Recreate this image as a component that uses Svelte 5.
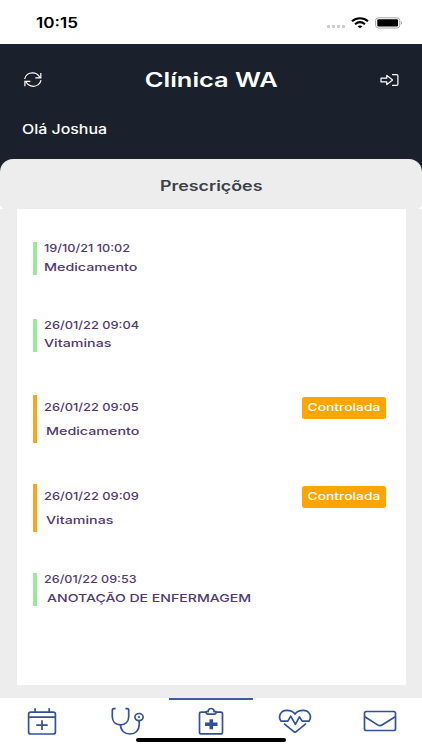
<script lang="ts">
	type Entry = {
		date: string;
		dateWidth: number;
		name: string;
		nameWidth: number;
		indent?: number;
		controlled?: boolean;
	};

	const entries: Entry[] = [
		{ date: '19/10/21 10:02', dateWidth: 85.5, name: 'Medicamento', nameWidth: 93.5 },
		{ date: '26/01/22 09:04', dateWidth: 95.5, name: 'Vitaminas', nameWidth: 67.5 },
		{ date: '26/01/22 09:05', dateWidth: 94.5, name: 'Medicamento', nameWidth: 93.5, indent: 2, controlled: true },
		{ date: '26/01/22 09:09', dateWidth: 94.5, name: 'Vitaminas', nameWidth: 67.5, indent: 2, controlled: true },
		{ date: '26/01/22 09:53', dateWidth: 92.5, name: 'ANOTAÇÃO DE ENFERMAGEM', nameWidth: 203.5, indent: 3 }
	];

	const tabs = ['calendar', 'stethoscope', 'clipboard', 'heart', 'mail'];
	let active = $state('clipboard');

	// Widens the letters so that the label takes the given width
	function fit(node: HTMLElement, width: number) {
		node.style.transform = `scaleX(${width / node.offsetWidth})`;
	}
</script>

<div class="screen">
	<div class="status">
		<span class="clock" use:fit={41.5}>10:15</span>
		<div class="status-icons">
			<div class="dots"><i></i><i></i><i></i><i></i></div>
			<svg class="wifi" width="18" height="12" viewBox="0 0 18 12" fill="none" stroke="#000" stroke-width="2">
				<path d="M1 4.2C5.5.3 12.5.3 17 4.2" />
				<path d="M4 7.2c3-2.5 7-2.5 10 0" />
				<path d="M6.6 9.3c1.5-1.1 3.3-1.1 4.800 0L9 11.3z" fill="#000" stroke="none" />
			</svg>
			<svg class="battery" width="28" height="12" viewBox="0 0 28 12">
				<rect x=".6" y=".8" width="24.2" height="10.2" rx="2.8" fill="none" stroke="#a5a5a5" />
				<rect x="2.3" y="2.3" width="20.8" height="7.2" rx="1.3" />
				<path d="M26 4.2c1.500.6 1.500 2.800 0 3.400z" fill="#a5a5a5" />
			</svg>
		</div>
	</div>

	<header>
		<div class="bar">
			<button aria-label="Atualizar">
				<svg width="20" height="18" viewBox="0 0 20 18" fill="none" stroke="#fff" stroke-width="1.2">
					<path d="M1.7 8C2.3 4.3 5.6 1.9 9.4 1.9c3.3 0 6.1 1.9 7.500 4.700" />
					<path d="M17.8 1.9v4.900h-5.500" />
					<path d="M18 9.2c-.6 3.7-4 6.100-7.700 6.100-3.300 0-6.100-1.900-7.500-4.700" />
					<path d="M1.9 15.3v-4.900h5.500" />
				</svg>
			</button>
			<h1 use:fit={133.5}>Clínica WA</h1>
			<button aria-label="Sair">
				<svg width="19" height="14" viewBox="0 0 19 14" fill="none" stroke="#fff" stroke-width="1.2" stroke-linejoin="round" stroke-linecap="round">
					<path d="M1 5.2h5.800V2.400L12.600 7l-5.800 4.600V8.900H1z" />
					<path d="M12.500 1.600h4.200c.8 0 1.200.4 1.200 1.100v8.600c0 .7-.4 1.100-1.200 1.100h-4.200" />
				</svg>
			</button>
		</div>
		<span class="hello" use:fit={84.5}>Olá Joshua</span>
	</header>

	<main>
		<div class="panel-title">
			<h2 use:fit={102}>Prescrições</h2>
		</div>
		<div class="card">
			{#each entries as entry}
				<div class="entry" class:controlled={entry.controlled}>
					<div class="info">
						<span use:fit={entry.dateWidth}>{entry.date}</span>
						<span use:fit={entry.nameWidth} style:margin-left="{entry.indent ?? 0}px">{entry.name}</span>
					</div>
					{#if entry.controlled}
						<div class="badge"><span use:fit={73}>Controlada</span></div>
					{/if}
				</div>
			{/each}
		</div>
	</main>

	<nav>
		{#each tabs as tab}
			<button class="tab" class:active={active === tab} aria-label={tab} onclick={() => (active = tab)}>
				<svg width="34" height="30" viewBox="0 0 34 30" fill="none" stroke="#33509a" stroke-width="1.7" stroke-linejoin="round">
					{#if tab === 'calendar'}
						<rect x="3.600" y="5.200" width="26.800" height="21.800" rx="2" />
						<path d="M3.600 10.200h26.800M10.100 1.200v4M24.200 1.200v4M17 13.200v9.800M11.300 18.100h11.400" />
					{:else if tab === 'stethoscope'}
						<path d="M5.600 1.700H3.800c-1 0-1.500.4-1.500 1.300v6.800c0 5 3.400 8 8.200 8s8.200-3 8.200-8V3c0-.9-.5-1.300-1.500-1.300h-1.800" />
						<path d="M10.500 17.800c0 5.600 3.900 9.200 9.400 9.200s9.300-3.600 9.300-9.200v-4.100" />
						<ellipse cx="29" cy="10.100" rx="4.100" ry="3.600" />
						<circle cx="29" cy="10.100" r="1.100" fill="#33509a" stroke="none" />
					{:else if tab === 'clipboard'}
						<path d="M12 5.200H7.300c-1 0-1.800.6-1.800 1.600v18.400c0 1 .8 1.700 1.800 1.700h19.400c1 0 1.800-.7 1.800-1.700V6.800c0-1-.8-1.600-1.800-1.600H22" />
						<path d="M12.100 4.600h2.200C14 2.600 15.300 1.500 17.100 1.500s3.200 1.100 2.900 3.100h2.100v1.200c0 .8-.5 1.300-1.400 1.300h-7.200c-.9 0-1.400-.5-1.400-1.300z" />
						<path d="M17.300 12.300v10M11 17.300h12.500" stroke-width="3.600" />
					{:else if tab === 'heart'}
						<path d="M2.900 14.100C-.2 9.600 2.400 3.500 8.800 3.400c3.600 0 6.400 1.300 8.200 3.600 1.800-2.300 4.600-3.600 8.200-3.600 6.400.1 9 6.200 5.900 10.700h-6.900l-2.800-4.200-4 7.400-4.700-8.200-2.900 5z" />
						<path d="M6 16.700l10.100 8.100q.9.700 1.800 0l10.100-8.100" />
					{:else}
						<rect x="1.500" y="4.500" width="31" height="19" rx="1.800" />
						<path d="M1.800 9.800l13.200 8.300q2 1.200 4 0l13.200-8.300" />
					{/if}
				</svg>
			</button>
		{/each}
		<div class="home"></div>
	</nav>
</div>

<style>
	:global(body) {
		margin: 0;
		background: #fff;
	}

	.screen {
		width: 422px;
		height: 750px;
		display: flex;
		flex-direction: column;
		background: #1b212c;
		font-family: Inter, 'Open Sans', sans-serif;
		overflow: hidden;
	}

	span,
	h1,
	h2 {
		display: block;
		width: max-content;
		margin: 0;
		white-space: nowrap;
		transform-origin: left center;
	}

	button {
		display: flex;
		padding: 0;
		border: none;
		background: none;
		cursor: pointer;
	}

	.status {
		height: 44px;
		box-sizing: border-box;
		padding: 1px 19px 0 35.5px;
		display: flex;
		justify-content: space-between;
		align-items: center;
		background: #fff;
	}

	.clock {
		font-size: 14px;
		font-weight: 600;
		line-height: 16px;
	}

	.status-icons {
		display: flex;
		align-items: center;
	}

	.dots {
		display: flex;
		gap: 2px;
		margin: 8px 6px 0 0;
	}

	.dots i {
		width: 3px;
		height: 3px;
		border-radius: 1px;
		background: #c7c7c7;
	}

	.wifi {
		margin-right: 6px;
	}

	header {
		height: 115px;
		color: #fff;
	}

	.bar {
		display: flex;
		align-items: center;
		justify-content: space-between;
		height: 72px;
		padding: 0 23px;
	}

	h1 {
		font-size: 20px;
		font-weight: 600;
		transform-origin: center;
	}

	.hello {
		margin-left: 22px;
		padding-top: 4px;
		font-size: 13px;
		font-weight: 500;
		line-height: 18px;
	}

	main {
		height: 539px;
		box-sizing: border-box;
		padding-bottom: 13px;
		background: #ededed;
		border-radius: 13px 13px 0 0;
		display: flex;
		flex-direction: column;
	}

	/* small white notches in the lower corners */
	.panel-title {
		height: 50px;
		display: flex;
		align-items: center;
		justify-content: center;
		padding-top: 2px;
		box-sizing: border-box;
		background:
			linear-gradient(45deg, #fff 2px, transparent 2.5px),
			linear-gradient(-45deg, #fff 2px, transparent 2.5px);
	}

	h2 {
		font-size: 14px;
		font-weight: 600;
		color: #3c3f47;
		transform-origin: center;
	}

	.card {
		flex: 1;
		margin: 0 16.5px;
		padding: 33px 19.5px 0 16.5px;
		background: #fff;
	}

	.entry {
		display: flex;
		justify-content: space-between;
		align-items: flex-start;
		height: 33px;
		margin-bottom: 43.5px;
		padding-left: 6.5px;
		border-left: 4px solid #98ea98;
		box-sizing: border-box;
	}

	.entry.controlled {
		height: 47.5px;
		margin-bottom: 41.5px;
		border-left-color: #f9a61f;
	}

	.info {
		margin-top: -1px;
		font-size: 11px;
		font-weight: 500;
		line-height: 14px;
		color: #523a70;
		display: flex;
		flex-direction: column;
		gap: 4.5px;
	}

	.controlled .info {
		padding-top: 6px;
		gap: 10px;
	}

	.badge {
		width: 84px;
		height: 22px;
		margin-top: 1.5px;
		padding-bottom: 1px;
		box-sizing: border-box;
		display: flex;
		align-items: center;
		justify-content: center;
		border-radius: 2.5px;
		background: #ffa500;
		color: #fff;
		font-size: 11px;
		font-weight: 500;
	}

	.badge span {
		transform-origin: center;
	}

	nav {
		position: relative;
		height: 52px;
		display: flex;
		background: #fff;
	}

	.tab {
		flex: 1;
		justify-content: center;
		align-items: flex-start;
		padding-top: 7px;
		border-top: 2px solid transparent;
	}

	.tab.active {
		border-top-color: #3f5ba3;
	}

	.home {
		position: absolute;
		left: 136px;
		bottom: 8px;
		width: 150px;
		height: 4px;
		border-radius: 2px;
		background: #000;
	}
</style>
